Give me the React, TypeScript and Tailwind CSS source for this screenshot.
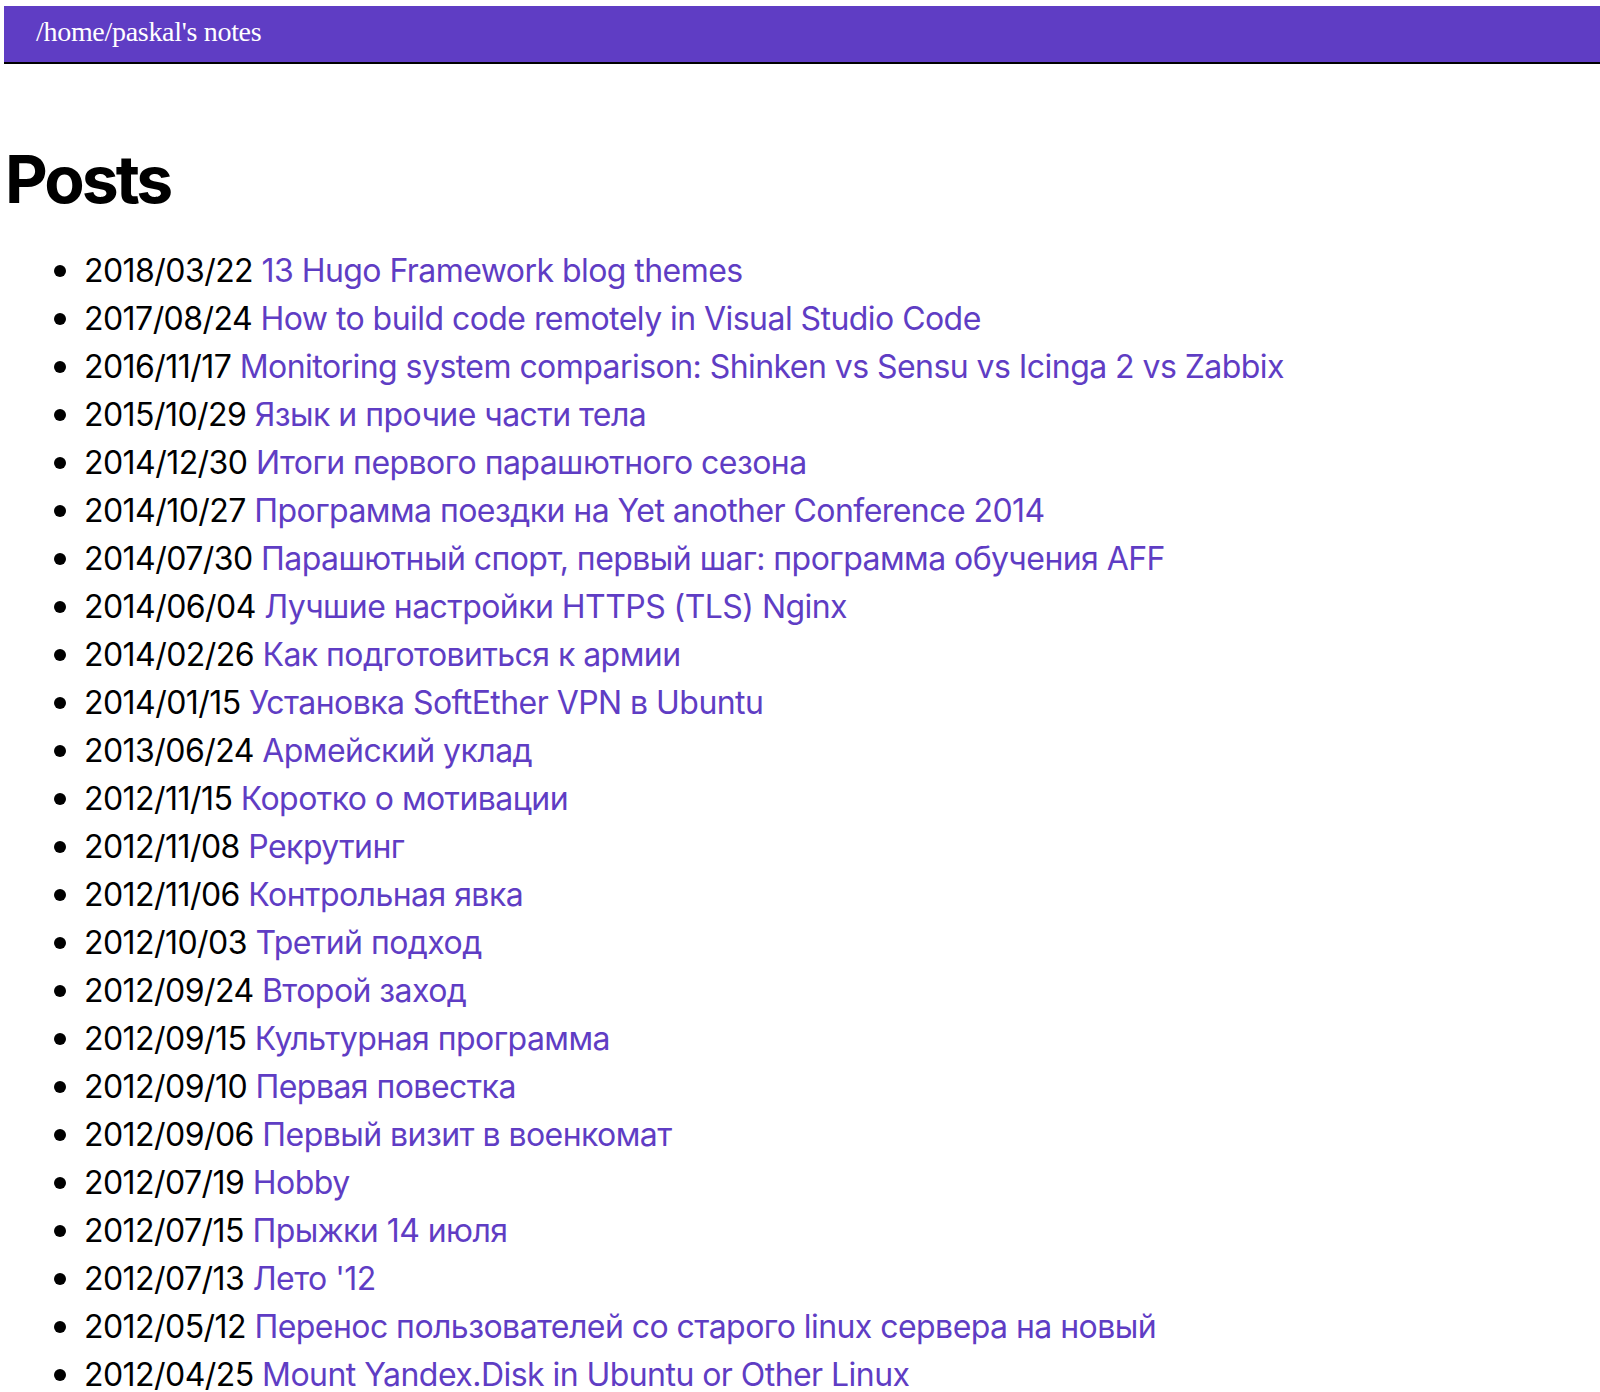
const posts: [string, string][] = [
  ["2018/03/22", "13 Hugo Framework blog themes"],
  ["2017/08/24", "How to build code remotely in Visual Studio Code"],
  ["2016/11/17", "Monitoring system comparison: Shinken vs Sensu vs Icinga 2 vs Zabbix"],
  ["2015/10/29", "Язык и прочие части тела"],
  ["2014/12/30", "Итоги первого парашютного сезона"],
  ["2014/10/27", "Программа поездки на Yet another Conference 2014"],
  ["2014/07/30", "Парашютный спорт, первый шаг: программа обучения AFF"],
  ["2014/06/04", "Лучшие настройки HTTPS (TLS) Nginx"],
  ["2014/02/26", "Как подготовиться к армии"],
  ["2014/01/15", "Установка SoftEther VPN в Ubuntu"],
  ["2013/06/24", "Армейский уклад"],
  ["2012/11/15", "Коротко о мотивации"],
  ["2012/11/08", "Рекрутинг"],
  ["2012/11/06", "Контрольная явка"],
  ["2012/10/03", "Третий подход"],
  ["2012/09/24", "Второй заход"],
  ["2012/09/15", "Культурная программа"],
  ["2012/09/10", "Первая повестка"],
  ["2012/09/06", "Первый визит в военкомат"],
  ["2012/07/19", "Hobby"],
  ["2012/07/15", "Прыжки 14 июля"],
  ["2012/07/13", "Лето '12"],
  ["2012/05/12", "Перенос пользователей со старого linux сервера на новый"],
  ["2012/04/25", "Mount Yandex.Disk in Ubuntu or Other Linux"],
];

const App = () => {
  return (
    <div className="min-h-[1392px] bg-white pt-[6px] pl-[4px] font-['Inter',sans-serif] text-black">
      <header className="h-[58px] border-b-2 border-black bg-[#5f3dc4] pl-[32px]">
        <a href="#" className="block pt-[10px] font-['Liberation_Serif',serif] text-[28px] leading-[32px] tracking-[-0.3px] text-white">
          /home/paskal's notes
        </a>
      </header>

      <h1 className="mt-[82px] pl-[1px] text-[66px] font-bold leading-none tracking-[-3px]">Posts</h1>

      <ul className="mt-[35px] list-disc pl-[80px] text-[32px] leading-[48px] tracking-[-0.55px] marker:text-[36px] marker:leading-[20px]">
        {posts.map(([date, title]) => (
          <li key={date + title} className="h-[48px]">
            {date}{" "}
            <a href="#" className="text-[#5f3dc4]">
              {title}
            </a>
          </li>
        ))}
      </ul>
    </div>
  );
};

export default App;
